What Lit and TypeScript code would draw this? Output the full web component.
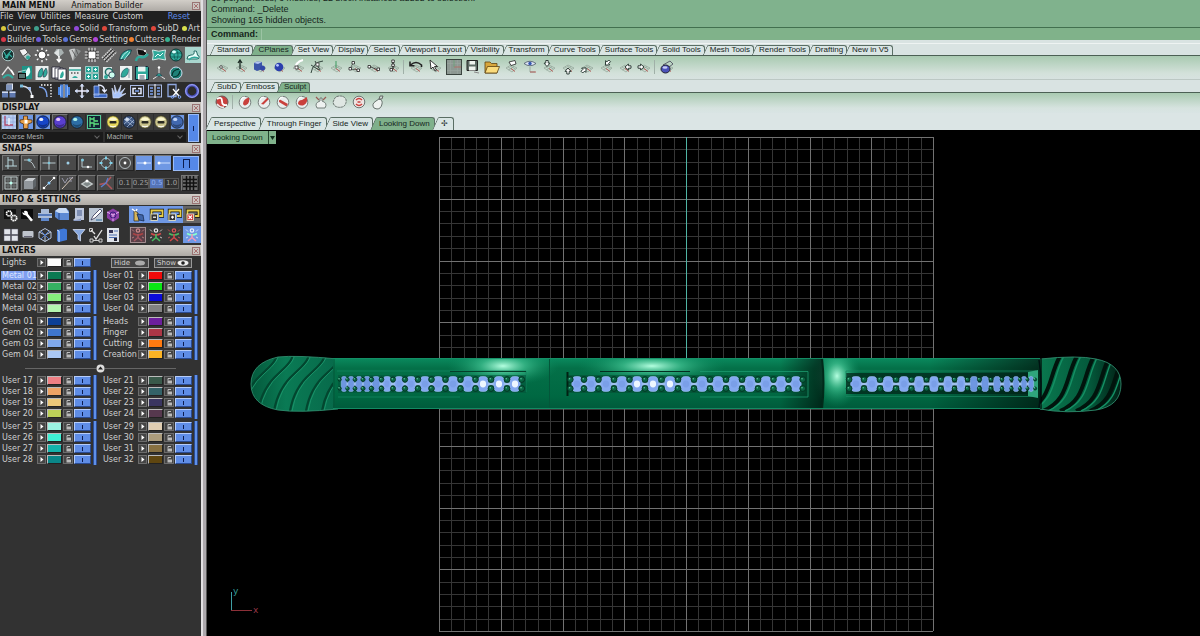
import { LitElement, html, css, svg, nothing } from "lit";
import { customElement, property } from "lit/decorators.js";
import { classMap } from "lit/directives/class-map.js";
import { styleMap } from "lit/directives/style-map.js";

const T = "#2fa99b";
const sphere = (c: string, hi = "#fff") => svg`
  <circle cx="8" cy="8" r="6.2" fill=${c} stroke="#12151c" stroke-width=".8"/>
  <path d="M3.4 9.5a4.8 4.8 0 0 0 9.3-.2 8 8 0 0 1-9.3.2z" fill="#000" opacity=".3"/>
  <ellipse cx="6.2" cy="5.4" rx="2.1" ry="1.7" fill=${hi} opacity=".9"/>`;
const bulb = (on: boolean) => svg`
  <circle cx="8" cy="8" r="6.3" fill=${on ? "#e6d75a" : "#c9c28a"} stroke="#3a3928"/>
  <path d="M3.5 5.5Q8 1 12.5 5.5 8 8 3.5 5.5z" fill="#fbf7cf"/>
  <rect x="4.5" y="7" width="7" height="2.4" rx="1" fill="#2a2a22"/>
  <path d="M5 12q3 1.6 6 0" stroke="#fff" fill="none"/>`;
const ring = (k: string) => svg`
  <ellipse cx="8" cy="8.4" rx="5.8" ry="6" fill="#e9eeee" stroke="#6c7472" stroke-width=".9"/>
  <path d=${k} fill="#c9403c"/><path d="M4 6q1-3 4-3" stroke="#fff" fill="none" stroke-width="1.2"/>`;
const plane = svg`
  <path d="M3 9l5-3 6 3-5 4zM5 8l6 3.5M7 7l5.500 3M5.500 11L11 7.500" fill="none" stroke="#8fa295" stroke-width=".7"/>
  <path d="M8 9.500l4 3" stroke="#b4615d" stroke-width="1"/>`;
const arrowAt = (x: number, y: number, a: number) => svg`
  <path transform=${`translate(${x} ${y}) rotate(${a})`} d="M-1.200 -3h2.400v2.600h1.800L0 3 -3 -.4h1.800z" fill="#fff" stroke="#20302a" stroke-width=".9"/>`;
const figure = (a: string, b: string, c: string) => svg`
  <circle cx="8" cy="3.500" r="1.700" fill="none" stroke=${a} stroke-width="1.200"/>
  <path d="M3 6.500q5 3 10 0" fill="none" stroke=${b} stroke-width="1.500"/>
  <path d="M8 7v3.500L4 14M8 10.500L12 14" fill="none" stroke=${c} stroke-width="1.600"/>
  <path d="M2 2.500l2 2M14 2.500l-2 2M2 11l2-1M14 11l-2-1" stroke=${a} stroke-width=".8"/>`;
const frame = (c: string, k: string) => svg`
  <path d="M3.500 13V3.500h11V9H11" fill="none" stroke="#111" stroke-width="3.400"/>
  <path d="M3.500 13V3.500h11V9H11" fill="none" stroke="#e5cc4b" stroke-width="1.800"/>
  <rect x="3" y="7" width="6.500" height="6.500" fill=${c} stroke="#f4efd0" stroke-width=".8"/>
  <path d=${k} stroke="#fff" stroke-width="1.200"/>`;

const ICONS: Record<string, unknown> = {
  orb: svg`<circle cx="8" cy="8" r="5.800" fill="#16302f" stroke="#a9c3c3"/><path d="M4 5l3 6 2-4 3 3M5 11l6-7" stroke=${T} fill="none" stroke-width="1.300"/>`,
  spot: svg`<path d="M2 3l6-1.500 3 4-5 4z" fill="#f2f2f2" stroke="#333" stroke-width=".7"/><path d="M6 9.500l5-4 3.500 3.500-4 5z" fill="#b9c4c4" stroke="#333" stroke-width=".7"/><circle cx="11" cy="10.500" r="2" fill=${T}/>`,
  sun: svg`<circle cx="8" cy="8" r="4" fill="#fff" stroke="#222" stroke-width=".8"/><path d="M8 .8v2.200M8 13v2.200M.8 8H3M13 8h2.200M2.900 2.900l1.500 1.500M11.600 11.600l1.500 1.500M2.900 13.100l1.500-1.500M11.600 4.400l1.500-1.500" stroke="#fff" stroke-width="1.300"/>`,
  gemlight: svg`<path d="M3 6l2.500-4h5L13 6l-5 4z" fill="#a8b1b1"/><path d="M3 6l5 4V2z" fill="#e0e4e4"/><path d="M8 9v5M5.800 12L8 14.800 10.200 12" stroke="#fff" stroke-width="1.500" fill="none"/>`,
  cone: svg`<path d="M2 3q6-3 12 1L6 14z" fill="#8b8f8f"/><path d="M2 3q3-1.500 6-1.200L6 14z" fill="#c9cccc"/><path d="M5 3l4 7M9 2.500l2 5" stroke="#444" stroke-width=".7"/>`,
  chip: svg`<rect x="4" y="4" width="8" height="8" fill="#fff" stroke="#111"/><path d="M5 .8v3M8 .8v3M11 .8v3M5 12v3M8 12v3M11 12v3M.8 5h3M.8 8h3M.8 11h3M12 5h3M12 8h3M12 11h3" stroke="#e8e8e8" stroke-width="1.100"/>`,
  hatch: svg`<path d="M1 11L11 1M3 13L13 3M5.500 15L15.500 5" stroke="#d8d8d8" stroke-width="1.400" stroke-dasharray="1.600 .7"/><path d="M2 12L12 2M4 14L14 4" stroke="#222" stroke-width=".7"/>`,
  fish: svg`<path d="M1.500 13q1-7 6-9 3-2 6-1-1 5-4 7-3 3-8 3z" fill=${T} stroke="#123" stroke-width=".7"/><path d="M3 12q2-5 7-8M6 13q3-4 6-8" stroke="#dff" fill="none" stroke-width=".8"/>`,
  snake: svg`<path d="M3 2l6 1 4 3-3 3-6-1z" fill="#111" stroke="#ddd" stroke-width=".6"/><path d="M2 14q1-5 5-4 4 1 7-3" fill="none" stroke=${T} stroke-width="2.400"/><circle cx="11" cy="4" r="1" fill="#fff"/>`,
  cloth: svg`<path d="M1.500 3q6 2.500 13 0-1.500 5 0 10-7-2.500-13 0 1.500-5 0-10z" fill=${T} stroke="#cfe9e6"/><path d="M4 10l3-3 2 2 3-3" stroke="#e9fffc" fill="none"/>`,
  globe: svg`<circle cx="8" cy="8" r="6" fill=${T} stroke="#103532"/><path d="M2.500 6h11M2.500 10h11M8 2q-4 6 0 12M8 2q4 6 0 12" stroke="#0e5a54" fill="none" stroke-width=".8"/><ellipse cx="6" cy="5" rx="2" ry="1.400" fill="#dff"/>`,
  twist: svg`<rect width="16" height="16" fill="#a9d6ce"/><path d="M2 12q0-4 4-4t3-4q3-1 3 2t2 3q1 3-2 3z" fill="#e9fffb" stroke="#256b64"/><path d="M4 13q3-4 9-2" stroke=${T} stroke-width="1.500" fill="none"/>`,
  arcs: svg`<path d="M2 10L8 2l5 6" fill="none" stroke="#e4e4e4" stroke-width="1.300"/><path d="M3 13q5-6 10 0" fill="none" stroke=${T} stroke-width="2"/><path d="M11 5l3 5" stroke="#fff" stroke-width="1.500"/>`,
  clapper: svg`<rect x="5" y="1" width="10" height="13" fill="#1f9387"/><path d="M8 12q0-7 4-10 3 5-1 9z" fill="#eafffc"/><rect x="1" y="8" width="8" height="6" fill="#111"/><path d="M1 7l8-2M2 10h6M2 12h6" stroke="#9fd8d2"/>`,
  page1: svg`<rect x="1.500" y="1" width="13" height="14" fill="#e9eeee"/><path d="M4 12q0-7 4-9 3 5-1 9zM9 12q0-6 3-9 3 5-1 9z" fill=${T} stroke="#234" stroke-width=".6"/>`,
  page2: svg`<path d="M1 2h8v11H1zM4 3h8v11H4z" fill="#fff" stroke="#223" stroke-width=".8"/><path d="M7 4h8v11H7z" fill="#fff" stroke="#223" stroke-width=".8"/><path d="M9 13q0-5 3-7 2 4-1 7z" fill=${T}/>`,
  calendar: svg`<rect x="2" y="2" width="12" height="13" fill="#e6ebeb"/><path d="M2 5h12" stroke=${T} stroke-width="1.500"/><path d="M4 8h1.500M7 8h1.500M10 8h1.500" stroke="#555" stroke-width="1.500"/><path d="M5 13q3-4 6 0z" fill=${T}/>`,
  quad: svg`<path d="M1.500 1.500h6v6h-6zM8.500 1.500h6v6h-6zM1.500 8.500h6v6h-6zM8.500 8.500h6v6h-6z" fill="#1f9f92" stroke="#bfe9e4" stroke-width=".7"/><path d="M3 4.500h3M10 4.500h3M3 11.500h3M10 11.500h3M4.500 3v3M11.500 3v3M4.500 10v3M11.500 10v3" stroke="#e9fffc"/>`,
  rings: svg`<rect x="2" y="2" width="9" height="12" fill="#dfe7e7"/><circle cx="8" cy="7" r="3.600" fill="none" stroke="#1d6f67" stroke-width="1.500"/><circle cx="11" cy="10" r="3.200" fill="#cfe" stroke="#345"/><circle cx="5" cy="12" r="2" fill=${T}/>`,
  page3: svg`<rect x="2" y="1" width="12" height="14" fill="#eef2f2"/><path d="M3 12Q3 5 9 3q3 1 1 5-2 5-7 4z" fill=${T} stroke="#245" stroke-width=".6"/><path d="M11 4v9" stroke="#89a"/>`,
  floppy: svg`<path d="M1.500 1.500h12l1 1v12h-13z" fill=${T} stroke="#123"/><rect x="4" y="1.500" width="7.500" height="5" fill="#e9f3f2"/><rect x="4" y="9" width="8" height="5.500" fill="#fff"/><path d="M5.500 11h5M5.500 13h5" stroke="#456"/>`,
  axes: svg`<path d="M8 2v8L2 14M8 10l6 4" stroke="#e8e8e8" fill="none"/><circle cx="8" cy="2.500" r="1.200" fill="#fff"/><path d="M5 11q3-5 6 0z" fill=${T} stroke="#134" stroke-width=".6"/>`,
  orb2: svg`<circle cx="8" cy="8" r="6" fill="#1e8178" stroke="#cde"/><path d="M4 11q0-6 7-7M5 12q6 0 7-6" stroke="#062e2a" fill="none" stroke-width="1.200"/>`,
  cubes: svg`<path d="M5 1.500h6v6H5z" fill="#7f94bc"/><path d="M5 1.500l1.500-1H12l-1 1zM11 1.500l1-1v5.500l-1 1.500z" fill="#dfe6f5"/><path d="M1 8.500h6v6H1zM8.500 8.500h6v6h-6z" fill="#5f78ae"/><path d="M1 8.500h6v1.500H1zM8.500 8.500h6v1.500h-6z" fill="#d3dcf0"/>`,
  curve: svg`<path d="M2 3q10 0 11 11" fill="none" stroke="#d3d9e4" stroke-width="1.300"/><rect x="1" y="1.500" width="3" height="3" fill="#7bd"/><rect x="9" y="4" width="3" height="3" fill="#9ab6ea"/><rect x="11.500" y="12" width="3" height="3" fill="#fff"/>`,
  offset: svg`<path d="M1 4q8 0 8 10" fill="none" stroke="#7aa0e8" stroke-width="1.500"/><path d="M3 2h10v12" fill="none" stroke="#fff" stroke-width="1.300" stroke-dasharray="1.500 1.500"/>`,
  mirror: svg`<path d="M7 1.500v13H4V12H2V4h2V1.500zM9 1.500v13h3V12h2V4h-2V1.500z" fill="#4b84dc"/><path d="M8 1v14" stroke="#dfe9ff"/><path d="M4.500 3v10M11.500 3v10" stroke="#9cc0ff" stroke-width=".8"/>`,
  move: svg`<path d="M8 1v14M1 8h14" stroke="#eef" stroke-width="1.500"/><path d="M5.500 3.500L8 .8l2.500 2.700zM5.500 12.500L8 15.200l2.500-2.700zM3.500 5.500L.8 8l2.700 2.500zM12.500 5.500L15.200 8l-2.700 2.500z" fill="#cdd9f5"/>`,
  rotate: svg`<path d="M2 3h5v9H2zM2 11h13v3.500H2z" fill="#3a66c4" stroke="#a9c0f4" stroke-width=".8"/><path d="M6 2q6.500 0 6.500 6M10.300 6.500l2.200 2.500 2.200-2.500" fill="none" stroke="#e8edff" stroke-width="1.300"/>`,
  burst: svg`<path d="M2 15L1 5l3 6-.5-9L6 10l4-8-1.500 8L14 5l-4 6.500 5-1L8 15z" fill="#a9c4fa" stroke="#dfe8ff" stroke-width=".6"/>`,
  link: svg`<rect x="1.500" y="2.500" width="13" height="11" fill="none" stroke="#aabbe6"/><path d="M7 5.500H4v5h3M9 5.500h3v5H9" fill="none" stroke="#e6ecff" stroke-width="1.500"/><path d="M6 8h4" stroke="#7ea4f4" stroke-width="1.500"/>`,
  split: svg`<rect x="1.500" y="2" width="13" height="12" fill="none" stroke="#aabbe6"/><path d="M8 1v14" stroke="#fff"/><path d="M3 5h3M3 8h3M3 11h3M10 5h3M10 8h3M10 11h3" stroke="#7ea4f4" stroke-width="1.300"/>`,
  cut: svg`<path d="M2 1.500h8v12H2z" fill="none" stroke="#8fa8e0" stroke-width="1.300"/><path d="M7 6l6 7M13 6l-6 7" stroke="#fff" stroke-width="1.300"/><circle cx="13.500" cy="14" r="1.300" fill="none" stroke="#7ea4f4"/><circle cx="6.500" cy="14" r="1.300" fill="none" stroke="#7ea4f4"/>`,
  donut: svg`<circle cx="8" cy="8" r="5.800" fill="none" stroke="#4b52c0" stroke-width="2.800"/><circle cx="8" cy="8" r="6.300" fill="none" stroke="#b4bcff" stroke-width=".9"/>`,
  cplane: svg`<rect x="1" y="1" width="14" height="14" fill="#b8cdf0"/><path d="M4 1v14M8 1v14M12 1v14M1 4h14M1 8h14M1 12h14" stroke="#8fa8d8" stroke-width=".7"/><path d="M4 2v9h8" fill="none" stroke="#b04a6a" stroke-width="1.300"/><path d="M8 4v7" stroke="#fff" stroke-width="1.300"/>`,
  hand: svg`<path d="M5.500 14.500V10L2 8.500V6l3.500-.5V2h4v3.500L14 6v2.500L10 10v4.500z" fill="#e8a14b" stroke="#4e2f10" stroke-width=".8"/><path d="M6.500 6h3v3.500h-3z" fill="#fff"/>`,
  sBlue: sphere("#1746c8"), sViolet: sphere("#5a3fd0", "#f6d6ff"), sSky: sphere("#2d6ea6", "#bfe"), sBig: sphere("#4168b0", "#cfe0ff"),
  sWire: svg`${sphere("#3f5a86", "#e6eefc")}<path d="M3 5l9 7M5 3l8 6M3 10l8-7M6 13l7-7" stroke="#b4c4de" stroke-width=".7"/>`,
  tree: svg`<rect x="1.500" y="1.500" width="13" height="13" fill="#123" stroke="#5c9"/><path d="M4 3v10M4 5h4M8 3v4h4M4 9h4v4M8 10h5" stroke="#5be07e" fill="none" stroke-width="1.300"/>`,
  bulb1: bulb(true), bulb2: bulb(false),
  sn1: svg`<path d="M5 2v12M2 11h12M5 5h5v6" fill="none" stroke="#b8d6dc"/>`,
  sn2: svg`<path d="M2 5h8M6 5q5 2 7 8" fill="none" stroke="#b5c0c4"/><circle cx="7" cy="5" r="1.500" fill="#7fc8dc"/>`,
  sn3: svg`<path d="M8 1.500v13M1.500 8h13" stroke="#b8c8cc"/><circle cx="8" cy="8" r="1.300" fill="#7fc8dc"/>`,
  sn4: svg`<circle cx="8" cy="8" r="1.500" fill="#9fd0e8"/>`,
  sn5: svg`<path d="M3 12h10M3 4v8" stroke="#b8c8cc"/><circle cx="3.500" cy="5" r="1.500" fill="#7fc8dc"/><circle cx="9" cy="12" r="1.300" fill="#fff"/>`,
  sn6: svg`<circle cx="8" cy="8" r="4.800" fill="none" stroke="#a8bcc4"/><path d="M8 1.500v3M8 11.500v3M1.500 8h3M11.500 8h3" stroke="#7fd0e8" stroke-width="2"/>`,
  sn7: svg`<circle cx="8" cy="8" r="5.500" fill="none" stroke="#b4bcc0"/><circle cx="8" cy="8" r="1.400" fill="#fff"/>`,
  sn8: svg`<path d="M1 8h14" stroke="#cfe0ff"/><circle cx="9" cy="8" r="1.500" fill="#fff"/>`,
  sn9: svg`<path d="M4 8h11" stroke="#cfe0ff"/><circle cx="4" cy="8" r="1.500" fill="#fff"/>`,
  grid: svg`<path d="M2 2h12v12H2zM8 2v12M2 8h12" fill="none" stroke="#b7c3c3"/><path d="M5 2v12M11 2v12M2 5h12M2 11h12" stroke="#7d8888" stroke-width=".6"/><circle cx="8" cy="8" r="1.500" fill="#bfe"/>`,
  cube: svg`<path d="M2 6l4-3h8l-3 3z" fill="#c8ccd0"/><path d="M2 6h9v8H2z" fill="#92979c"/><path d="M11 6l3-3v8l-3 3z" fill="#5f6468"/>`,
  line: svg`<path d="M3 13L13 3" stroke="#c2c8cc"/><circle cx="3" cy="13" r="1.300" fill="#fff"/><circle cx="8" cy="8" r="1.500" fill="#8cf"/><circle cx="13" cy="3" r="1.300" fill="#fff"/>`,
  vp: svg`<path d="M2 14L13 2" stroke="#d5c5b5"/><path d="M2 3l3 5 3-5M9 3h4M9 6h3" stroke="#99a" fill="none"/>`,
  tile: svg`<path d="M1.500 9L8 5l6.500 4L8 13z" fill="#c3c9c9"/><path d="M4 9l4-2.500L12 9l-4 2.500z" fill="#808888"/><circle cx="8" cy="6" r="1.500" fill="#fff"/>`,
  kite: svg`<path d="M1.500 9.500L8 8l5-6M8 8l6 6" fill="none" stroke="#b0555a" stroke-width="1.500"/><path d="M3 12l5-4 2-5" stroke="#5b7fd0" stroke-width="1.300" fill="none"/>`,
  lattice: svg`<rect x="1" y="1" width="14" height="14" fill="#6c6c6c"/><path d="M4.500 1v14M8 1v14M11.500 1v14M1 4.500h14M1 8h14M1 11.500h14" stroke="#111" stroke-width="1.500"/>`,
  gears: svg`<rect x="1" y="2" width="12" height="10" fill="#111"/><circle cx="6" cy="6.500" r="2.500" fill="none" stroke="#fff" stroke-width="1.700" stroke-dasharray="1.500 .5"/><circle cx="11" cy="11" r="2.700" fill="#333" stroke="#fff" stroke-width="1.800" stroke-dasharray="1.500 .6"/>`,
  wrench: svg`<rect x="1" y="2" width="12" height="10" fill="#0a0a0a"/><path d="M4 4q4-1 4 3l5 6-2 1.500-5-6Q2 8 2.500 5l2 1.500z" fill="#fff"/>`,
  printer: svg`<path d="M4 2h8v4H4zM1 6h14v5H1z" fill="#a9bcd8"/><path d="M1 8h14" stroke="#3c66b0" stroke-width="1.500"/><path d="M4 11h8v3H4z" fill="#5f88cc"/>`,
  boxes: svg`<path d="M1 4l4-3h7l3 3v9H5l-4-3z" fill="#5d8ad4"/><path d="M1 4l4 2h10l-3-5H5z" fill="#c9dbf5"/><path d="M5 6v7" stroke="#1f3f80"/>`,
  sheet: svg`<path d="M4 1h9v12H2l2-2z" fill="#bcc6dc"/><path d="M6 4h5M6 6h5M6 8h5" stroke="#445b8c"/><path d="M2 13q6 0 8-2v3H3z" fill="#8c9cc4"/>`,
  pen: svg`<rect x="1" y="1" width="14" height="14" fill="#b9c4d2"/><path d="M3 13l2-4 7-7 2 2-7 7z" fill="#fff" stroke="#335" stroke-width=".8"/><path d="M8 13h6" stroke="#2c6c9c"/>`,
  magcube: svg`<path d="M2 5l6-3.500L14 5v6l-6 4-6-4z" fill="#8d3fa8"/><path d="M2 5l6 3 6-3M8 8v6" stroke="#e4b4f4" fill="none"/><circle cx="8" cy="8" r="3" fill="none" stroke="#3b1c80"/>`,
  spray: svg`<path d="M4 3l4 3 1 8H4z" fill="#d8b65a" stroke="#222" stroke-width=".7"/><path d="M7 7l6 1 1 6-5-1z" fill="#3f64a8" stroke="#124" stroke-width=".7"/><path d="M2 2l3 2M7 2L6 4" stroke="#fff" stroke-width="1.500"/>`,
  fr1: frame("#333", "M5 10.200h3"), fr2: frame("#333", "M5 10.200h3M6.500 8.700v3"), fr3: frame("#c33", "M4.500 8.500l3.500 3.500M8 8.500L4.500 12"),
  win: svg`<path d="M1 2h6.500v5.500H1zM8.500 2H15v5.500H8.500zM1 8.500h6.500V14H1zM8.500 8.500H15V14H8.500z" fill="#e2e5ea" stroke="#556" stroke-width=".5"/>`,
  label: svg`<rect x="2.500" y="4" width="11" height="6.500" rx="1" fill="#bfc4cc"/><path d="M4 9.500h8" stroke="#667"/>`,
  wirebox: svg`<path d="M2 5l6-3.500L14 5v6l-6 3.500L2 11zM2 5l6 3 6-3M8 8v6.500" fill="none" stroke="#b9c6dc"/><path d="M4 4l8 8M12 4l-8 8" stroke="#4d78c8"/>`,
  book: svg`<path d="M3 3l7-1.500 3 1V13l-8 2-2-1z" fill="#3f78d8"/><path d="M3 3l2 1v11" stroke="#cfe0ff" fill="none"/>`,
  funnel: svg`<path d="M2 2.500h12L9.500 8v6L7 12V8z" fill="#86a6dc" stroke="#e4ecff" stroke-width=".7"/>`,
  nodes: svg`<path d="M3 3l4 4M6 9l2 3 6-9" fill="none" stroke="#e4e4e4" stroke-width="1.300"/><path d="M1.500 1.500h3v3h-3zM2 12h3v3H2zM11 12h3v3h-3z" fill="none" stroke="#ccc"/><path d="M5 13.500h6" stroke="#ccc"/>`,
  card: svg`<rect x="2" y="1" width="12" height="14" fill="#dfe3ea"/><rect x="4" y="3" width="4" height="3" fill="#335"/><path d="M9 4h4M4 8h8M4 10.500h8" stroke="#4a6cb0"/><rect x="9" y="11" width="3" height="3" fill="#223"/>`,
  f1: svg`<rect x=".5" y=".5" width="15" height="15" fill="#5a4048" stroke="#b9a0a4" stroke-width=".8"/>${figure("#c88", "#a44", "#a35560")}`,
  f2: figure("#e7e7e7", "#d04a4a", "#49b862"), f3: figure("#d55", "#49b862", "#d04a4a"), f4: figure("#e4f0ff", "#8fc", "#e9b"),
  p1: svg`${plane}<circle cx="7" cy="8" r="1.300" fill="#fff" stroke="#222" stroke-width=".7"/>`,
  p2: svg`${plane}<path d="M7 10V1.500M5 4l2-3 2 3" stroke="#1c2a24" stroke-width="1.300" fill="none"/>`,
  p3: svg`${plane}<path d="M2 4l3-1.500 5 .5v7l-5 2-3-1.500z" fill="#3b55a8"/><path d="M2 4l3-1.500 5 .5-4 2z" fill="#b3c4f0"/><circle cx="10.500" cy="9" r="2.600" fill="#3348a8"/>`,
  p4: svg`${plane}<circle cx="8" cy="8" r="4.300" fill="#2b3fae"/><circle cx="6.500" cy="6.300" r="1.400" fill="#b6c6ff"/>`,
  p5: svg`${plane}<path d="M13 1Q5 3 5 11" stroke="#fff" stroke-width="2" fill="none"/><rect x="5" y="7" width="3" height="3" fill="#fff" stroke="#222" stroke-width=".8"/>`,
  p6: svg`${plane}<path d="M2 14q2-11 12-12M6 2l5 9M2 6l8 5" stroke="#33453d" fill="none" stroke-width="1"/><rect x="7" y="4" width="3" height="3" fill="#fff" stroke="#222" stroke-width=".7"/>`,
  p7: svg`${plane}<path d="M8 9V2" stroke="#4aa06a" stroke-width="1.100"/>`,
  p8: svg`${plane}<path d="M6 4l-3 6 8 1" stroke="#222" stroke-width=".6" fill="none"/><path d="M5 2.500h2.500V5H5zM2 8.500h2.500V11H2zM10 10h2.500v2.500H10z" fill="#fff" stroke="#222" stroke-width=".8"/>`,
  p9: svg`${plane}<path d="M2 6.500h2.500V9H2zM11 9h2.500v2.500H11z" fill="#fff" stroke="#222" stroke-width=".8"/><path d="M5 8l6 2.500" stroke="#222" stroke-width=".7"/>`,
  p10: svg`${plane}<path d="M8 10V3" stroke="#222" stroke-width="1.200"/><path d="M6.800 1h2.500v2.500H6.800zM6.800 5h2.500v2.500H6.800zM5 9.500h2.500V12H5z" fill="#fff" stroke="#222" stroke-width=".8"/>`,
  undo: svg`${plane}<path d="M2.500 6Q8 1 13.500 6v2M2 2.500v4.200h4.500" stroke="#222" stroke-width="1.600" fill="none"/>`,
  pick: svg`${plane}<path d="M3 1l1 9 2-2 2 4 1.500-.8-2-3.700h3z" fill="#fff" stroke="#222" stroke-width=".9"/>`,
  cgrid: svg`<rect x=".5" y=".5" width="15" height="15" fill="#8d9892" stroke="#3a443f"/><path d="M1 4.500h14M1 11.500h14M4.500 1v14M11.500 1v14" stroke="#9aa59f" stroke-width=".7"/><path d="M8 8h7" stroke="#b07068"/><path d="M8 1v7" stroke="#70a07c"/>`,
  save: svg`<path d="M2 1.500h10.500v10H2z" fill="#5c6a64" stroke="#222"/><path d="M4.500 2h5.500v3.500H4.500zM4 7.500h6.500v4H4z" fill="#eef2ee"/><path d="M9 13l5 1" stroke="#888"/>`,
  folder: svg`<path d="M1 3h5l1.500 1.500H13V14H1z" fill="#d8a63c" stroke="#5e4310" stroke-width=".8"/><path d="M3.500 7.500H15.500L13 14H1z" fill="#fbdc7c" stroke="#5e4310" stroke-width=".8"/>`,
  q1: svg`${plane}<path d="M6 3l6-1.500 1 3.500-5 1.500z" fill="#fff" stroke="#222" stroke-width=".8"/>`,
  q2: svg`<path d="M2 4.500q6-4.500 12 0-6 4.500-12 0z" fill="#dfe6f5" stroke="#4a5568" stroke-width=".8"/><circle cx="8" cy="4.500" r="1.700" fill="#3658b0"/><path d="M8 8v5h5" stroke="#99a8a0" fill="none"/><path d="M8 13h6" stroke="#b4615d"/>`,
  a1: svg`${plane}${arrowAt(6, 4.5, 0)}`, a2: svg`${plane}${arrowAt(8, 12, 180)}`, a3: svg`${plane}${arrowAt(5, 11, 225)}`, a4: svg`${plane}${arrowAt(9.5, 4, 45)}`,
  a5: svg`${plane}${arrowAt(11, 8, 90)}`, a6: svg`${plane}${arrowAt(5, 8, 270)}`,
  q3: svg`${plane}<path d="M4 6L11 2l3 3-4 3z" fill="none" stroke="#445" stroke-width=".8"/><ellipse cx="6.500" cy="10" rx="4.500" ry="4" fill="#4a52b8" stroke="#223"/><ellipse cx="6" cy="8.500" rx="2.500" ry="1.300" fill="#c6ccf6"/>`,
  r0: svg`<circle cx="8" cy="8" r="6" fill="#c9413e" stroke="#6a5a58"/><path d="M3 5q5-3 5 2t5 4" stroke="#fff" stroke-width="1.800" fill="none"/><path d="M3 10q3 4 7 3" stroke="#e9eeee" stroke-width="1.400" fill="none"/>`,
  r1: ring("M6 10q0-5 6-6.500 1 5-2 7-3 2-4-.5z"), r2: ring("M5 10l6.500-6.500 1 2-5 5z"), r3: ring("M4 5l9 5-1.500 2.500L4 8z"), r4: ring("M4 10q0-4 4-4l5-3q1 6-3 8-3 1.500-6-1z"),
  r5: svg`<path d="M4 14q-3-5 3-7V4h2v3q6 2 3 7z" fill="#eef2f0" stroke="#68736e" stroke-width=".9"/><path d="M3 3l3 3M13 3l-3 3" stroke="#9a5a54" stroke-width="1.200"/>`,
  r6: svg`<path d="M5 2.500q3-1 6 0 4 2 3 6-1 4-4 4.500-4 1-7-1-3-3-1-6 1-3 3-3.500z" fill="#dfe7e3" stroke="#68736e" stroke-width="1" stroke-dasharray="2.500 .6"/>`,
  r7: svg`<circle cx="8" cy="8" r="5.800" fill="#eee3e1" stroke="#6c7472"/><path d="M5 6q3-3 6 0M5 10q3 3 6 0M6.500 8h3" stroke="#c9403c" stroke-width="1.500" fill="none"/>`,
  r8: svg`<path d="M4 14q-3-4 2-7l3-2q4 1 3 5-1 5-5 5z" fill="#eef2f0" stroke="#68736e"/><path d="M9 5l1-3h3l-1 3z" fill="#cdd5d1" stroke="#444" stroke-width=".7"/>`,
};

@customElement("tool-icon")
class ToolIcon extends LitElement {
  static styles = css`
    :host { display: inline-flex; }
    .b { all: unset; display: flex; align-items: center; justify-content: center; flex: 1; cursor: pointer; overflow: hidden; }
    .b:focus-visible { outline: 1px solid #9cf; }
    .g { width: 16px; height: 16px; display: block; flex: none; }
  `;
  @property() name = "";
  @property() tip = "";
  render() {
    return html`<button class="b" type="button" aria-label=${this.tip || this.name}>
      <svg class="g" viewBox="0 0 16 16" aria-hidden="true">${ICONS[this.name]}</svg></button>`;
  }
}

type Layer = [string, string];
const GROUPS: { rows: Layer[] }[][] = [
  [
    { rows: [["Metal 01", "#0c7a52"], ["Metal 02", "#35b062"], ["Metal 03", "#86ef7c"], ["Metal 04", "#b4f5b0"]] },
    { rows: [["User 01", "#f00a0a"], ["User 02", "#08e814"], ["User 03", "#0a0ad8"], ["User 04", "#828282"]] },
  ],
  [
    { rows: [["Gem 01", "#0c3f96"], ["Gem 02", "#3f76cc"], ["Gem 03", "#7fa8ec"], ["Gem 04", "#abc8f4"]] },
    { rows: [["Heads", "#6c1f9c"], ["Finger", "#ab3646"], ["Cutting", "#ff7a10"], ["Creation", "#fbb324"]] },
  ],
  [
    { rows: [["User 17", "#ee7f84"], ["User 18", "#eda365"], ["User 19", "#ecc879"], ["User 20", "#bcd058"]] },
    { rows: [["User 21", "#39594a"], ["User 22", "#336268"], ["User 23", "#3a3560"], ["User 24", "#56384e"]] },
  ],
  [
    { rows: [["User 25", "#9bf2e2"], ["User 26", "#3ff0d4"], ["User 27", "#14b3ab"], ["User 28", "#0a8688"]] },
    { rows: [["User 29", "#dfcdb2"], ["User 30", "#ab9c7c"], ["User 31", "#877041"], ["User 32", "#5f4610"]] },
  ],
];

@customElement("tool-panel")
class ToolPanel extends LitElement {
  static styles = css`
    :host { display: flex; flex-direction: column; background: #323232; color: #d0d0d0; font: 8px/11px "DejaVu Sans", Verdana, sans-serif; }
    button { font: inherit; color: inherit; }
    .head { display: flex; align-items: center; height: 11px; margin: 0; padding: 0 1px 0 2px; background: linear-gradient(#d2cec8, #aeaaa5); color: #111; white-space: nowrap; }
    .head h2 { font: inherit; font-weight: bold; margin: 0; }
    .head .sub { margin-left: 16px; }
    .x { margin-left: auto; width: 8px; height: 8px; padding: 0; border: 1px solid #9a7474; background: #c9c4c0; display: block; }
    .x svg { display: block; width: 6px; height: 6px; }
    .menu { display: flex; height: 11px; background: #202020; }
    .menu button, .tags button { all: unset; cursor: pointer; white-space: nowrap; }
    .menu button { margin-right: 4px; }
    .menu .reset { margin: 0 11px 0 auto; color: #5f8be8; }
    .tags { display: flex; justify-content: space-between; height: 12px; align-items: center; padding: 0 1px; background: #242424; overflow: hidden; }
    .tags.last { padding-bottom: 1px; height: 11px; }
    .tags button { display: flex; align-items: center; }
    .dot { width: 5px; height: 5px; border-radius: 50%; margin-right: 1px; }
    .icons { display: grid; grid-auto-rows: 18px; }
    .twelve { grid-template-columns: repeat(12, minmax(0, 1fr)); background: #646464; }
    .eleven { grid-template-columns: repeat(11, minmax(0, 1fr)); background: #2c2c2c; margin-bottom: 2px; }
    .display { display: grid; grid-template-columns: minmax(0, 102fr) minmax(0, 81fr) 11px; gap: 0 2px; padding: 1px 2px 1px 0; height: 30px; box-sizing: border-box; background: #2e2e2e; }
    .row { display: flex; gap: 1px; padding: 0 1px; }
    .row tool-icon, .snap tool-icon { height: 16px; background: #4a4a4a; border: 1px solid #777; border-color: #777 #222 #222 #777; box-sizing: border-box; }
    .row tool-icon { flex: 1 1 0; min-width: 0; }
    .row tool-icon.plain { background: #3a3a3a; border-color: #3a3a3a; }
    tool-icon.on { background: #6f98e4 !important; }
    .sel { display: flex; position: relative; margin-top: 2px; }
    .sel select { appearance: none; width: 100%; height: 10px; padding: 0 2px; border: 0; background: #1a1a1a; color: #b0b0b0; font: 7px/10px "Liberation Sans", Arial, sans-serif; }
    .sel::after { content: ""; position: absolute; right: 4px; top: 2px; width: 3px; height: 3px; border: solid #666; border-width: 0 1px 1px 0; transform: rotate(45deg); pointer-events: none; }
    .tall { border: 1px solid #9bbcf8; background: #5588e8; padding: 0; display: flex; align-items: center; justify-content: center; }
    .bar { width: 1px; height: 5px; background: #0c1c50; }
    .snap { display: flex; height: 18px; align-items: center; gap: 1px; padding: 0 2px; }
    .snap tool-icon { flex: 0 0 16px; }
    .snap + .snap { margin: 2px 0; }
    .big { margin-left: auto; width: 34px; height: 15px; }
    .big .bar { width: 5px; height: 8px; border: solid #0c1c50; border-width: 1px 1px 0 1px; background: none; }
    .steps { display: flex; flex: 1; margin: 0 1px; }
    .steps button { flex: 1; height: 11px; padding: 0; border: 1px solid #555; background: #303030; color: #a0a0a0; line-height: 9px; font-size: 7px; }
    .steps .hot { background: #5574b8; color: #8fb0f4; }
    .info { display: flex; height: 19px; justify-content: space-between; align-items: center; padding: 0 0 0 2px; }
    .info.second { margin: 1px 0; }
    .info div { display: grid; grid-auto-flow: column; grid-auto-columns: 17px; height: 17px; }
    .info .g2 { grid-auto-columns: 18px; background: #666; }
    .info .g2.dark { background: #3a3a3a; }
    .lights { display: flex; justify-content: space-between; padding: 1px 9px 0 1px; height: 13px; box-sizing: border-box; margin-bottom: 1px; }
    .hs { display: flex; gap: 5px; padding-top: 1px; }
    .hs button { display: flex; align-items: center; justify-content: space-between; width: 38px; height: 10px; border: 1px solid #999; background: #444; padding: 0 2px; font-size: 7px; line-height: 8px; color: #d0d0d0; }
    .hs svg { width: 13px; height: 6px; }
    .pair { display: grid; grid-template-columns: 1fr 1fr; gap: 5px; padding: 0 4px 0 1px; margin-bottom: 2px; }
    .grp { display: grid; grid-template-columns: 1fr 4px; gap: 2px; }
    .side { background: #5f90e8; border: solid #2b4c94; border-width: 0 1px; box-sizing: border-box; }
    .lay { display: grid; grid-template-columns: 35px 9px 15px 10px 17px; gap: 1px; height: 11px; align-items: center; box-sizing: border-box; }
    .lay .nm { all: unset; padding-left: 1px; white-space: nowrap; cursor: pointer; }
    .lay .nm.cur { background: #7f9ff0; color: #dbe5ff; height: 9px; line-height: 9px; }
    .lay .c { height: 9px; padding: 0; border: 1px solid #6c6c6c; box-sizing: border-box; background: #454545; display: flex; align-items: center; justify-content: center; }
    .lay .c svg { width: 7px; height: 7px; display: block; }
    .lay .sw { border-color: #bbb #222 #222 #bbb; }
    .lay .tg { background: #5f8de6; border-color: #b5ccfa #2b4c94 #2b4c94 #b5ccfa; }
    .lay .tg .bar { height: 4px; }
    .rule { display: flex; align-items: center; gap: 0; padding: 0 25px; height: 13px; }
    .rule i { flex: 1; height: 1px; background: #666; }
    .rule button { padding: 0; border: 0; background: none; display: flex; }
    .rule svg { width: 9px; height: 9px; }
  `;
  head(t: string, sub = "") {
    return html`<div class="head"><h2>${t}</h2>${sub ? html`<span class="sub">${sub}</span>` : nothing}
      <button class="x" aria-label="Close"><svg viewBox="0 0 6 6"><path d="M1 1l4 4M5 1L1 5" stroke="#a05a5a" stroke-width=".8"/></svg></button></div>`;
  }
  tags(items: string[][], last = false) {
    return html`<div class=${classMap({ tags: true, last })}>${items.map(([n, c]) => html`<button><span class="dot" style=${styleMap({ background: c })}></span>${n}</button>`)}</div>`;
  }
  list(names: string, cls = "", on = "") {
    return names.split(" ").map((n, i) => html`<tool-icon name=${n} class="${cls} ${on[i] === "1" ? "on" : ""}"></tool-icon>`);
  }
  layer(n: string, c: string) {
    return html`<div class="lay">
      <button class=${classMap({ nm: true, cur: n === "Metal 01" })}>${n}</button>
      <button class="c" aria-label="Expand ${n}"><svg viewBox="0 0 7 7"><path d="M2.500 1l3 2.500-3 2.500z" fill="#fff"/></svg></button>
      <button class="c sw" aria-label="Colour of ${n}" style=${styleMap({ background: c })}></button>
      <button class="c" aria-label="Lock ${n}"><svg viewBox="0 0 7 7"><path d="M2 3.500V1.500h3" fill="none" stroke="#ccc" stroke-width=".9"/><path d="M1.500 3.500h4.500v3H1.500z" fill="#bbb"/></svg></button>
      <button class="c tg" aria-label="Show ${n}"><span class="bar"></span></button>
    </div>`;
  }
  pair(g: { rows: Layer[] }[]) {
    return html`<div class="pair">${g.map((s) => html`<div class="grp"><div>${s.rows.map(([n, c]) => this.layer(n, c))}</div><span class="side"></span></div>`)}</div>`;
  }
  render() {
    return html`
      ${this.head("MAIN MENU", "Animation Builder")}
      <nav class="menu">${["File", "View", "Utilities", "Measure", "Custom"].map((m) => html`<button>${m}</button>`)}<button class="reset">Reset</button></nav>
      ${this.tags([["Curve", "#d8c83c"], ["Surface", "#3fa08c"], ["Solid", "#9048d8"], ["Transform", "#e0483c"], ["SubD", "#e0483c"], ["Art", "#d8e04c"]])}
      ${this.tags([["Builder", "#d83848"], ["Tools", "#6c5cd8"], ["Gems", "#5c74d8"], ["Setting", "#b048d8"], ["Cutters", "#f08030"], ["Render", "#38b090"]], true)}
      <div class="icons twelve">${this.list("orb spot sun gemlight cone chip hatch fish snake cloth globe twist arcs clapper page1 page2 calendar quad rings page3 floppy axes orb2")}</div>
      <div class="icons eleven">${this.list("cubes curve offset mirror move rotate burst link split cut donut")}</div>
      ${this.head("DISPLAY")}
      <div class="display">
        <div><div class="row">${this.list("cplane hand sBlue sViolet", "", "1110")}${this.list("sSky tree", "plain")}</div>
          <label class="sel"><select aria-label="Mesh quality"><option>Coarse Mesh</option></select></label></div>
        <div><div class="row">${this.list("bulb1 sWire bulb2 bulb2 sBig", "plain", "00001")}</div>
          <label class="sel"><select aria-label="Display mode"><option>Machine</option></select></label></div>
        <button class="tall" aria-label="Toggle display"><span class="bar"></span></button>
      </div>
      ${this.head("SNAPS")}
      <div class="snap">${this.list("sn1 sn2 sn3 sn4 sn5 sn6 sn7 sn8 sn9", "", "000000011")}<button class="tall big" aria-label="Toggle snaps"><span class="bar"></span></button></div>
      <div class="snap">${this.list("grid cube line vp tile kite")}
        <div class="steps"><button>0.1</button><button>0.25</button><button class="hot">0.5</button><button>1.0</button></div>${this.list("lattice")}</div>
      ${this.head("INFO & SETTINGS")}
      <div class="info"><div>${this.list("gears wrench printer boxes sheet pen magcube")}</div><div class="g2">${this.list("spray fr1 fr2 fr3", "", "1110")}</div></div>
      <div class="info second"><div>${this.list("win label wirebox book funnel nodes card")}</div><div class="g2 dark">${this.list("f1 f2 f3 f4", "", "0001")}</div></div>
      ${this.head("LAYERS")}
      <div class="lights"><div>${this.layer("Lights", "#fbfbfb")}</div>
        <div class="hs"><button>Hide<svg viewBox="0 0 13 6"><ellipse cx="7" cy="3" rx="5" ry="2.500" fill="#aaa"/></svg></button>
        <button>Show<svg viewBox="0 0 13 6"><ellipse cx="7" cy="3" rx="5.500" ry="2.700" fill="#eee"/><circle cx="7" cy="3" r="1.800" fill="#222"/></svg></button></div></div>
      ${this.pair(GROUPS[0])}${this.pair(GROUPS[1])}
      <div class="rule"><i></i><button aria-label="Collapse"><svg viewBox="0 0 9 9"><circle cx="4.500" cy="4.500" r="4" fill="#ddd"/><path d="M2 5.500l2.500-3 2.500 3z" fill="#222"/></svg></button><i></i></div>
      ${this.pair(GROUPS[2])}${this.pair(GROUPS[3])}
    `;
  }
}

@customElement("model-view")
class ModelView extends LitElement {
  static styles = css`
    :host { display: flex; flex: 1; min-height: 0; position: relative; background: #000; }
    .scene { width: 100%; height: 100%; display: block; }
    .title { position: absolute; left: 0; top: 1px; display: flex; height: 13px; background: #80b28b; border: 0; padding: 0; font: 8px/13px "Liberation Sans", Arial, sans-serif; color: #10301c; }
    .title span { padding: 0 5px; border-right: 1px solid #24442e; }
    .title svg { width: 7px; height: 13px; }
    .ax { font: 9px "Liberation Mono", monospace; }
  `;
  stones(xs: number[], bright: number[], wf: (i: number) => number) {
    const mids = xs.map((x, i) => (i ? (x + xs[i - 1]) / 2 : x - wf(0) - 1.5));
    mids.push(xs[xs.length - 1] + wf(xs.length - 1) + 1.5);
    return svg`
      <rect x=${xs[0]} y="382.500" width=${xs[xs.length - 1] - xs[0]} height="3" fill="#9fc0ef"/>
      ${xs.map((x, i) => {
        const w = wf(i);
        const hot = bright.includes(i);
        return svg`
          <rect x=${x - w} y="376.500" width=${w * 2} height="15" rx=${w * 0.75} ry="4.500" fill=${w < 4 ? "#6c97e0" : "#84a9f0"} stroke="#a4c2f6" stroke-width=".5"/>
          <ellipse cx=${x} cy="384" rx=${w * 0.6} ry="3.400" fill=${hot ? "#f2faff" : "#7298e2"} opacity=${hot ? 0.95 : 0.55}/>`;
      })}
      ${mids.map((m, i) => {
        const r = Math.min(2.9, wf(Math.min(i, xs.length - 1)) * 0.58);
        return [379.500, 388.500].map((y) => svg`<circle cx=${m} cy=${y} r=${r} fill="#0a6544" stroke="#022c1c" stroke-width=".8"/><circle cx=${m - 0.7} cy=${y - 0.7} r=".8" fill="#5cc49a"/>`);
      })}`;
  }
  render() {
    const lines = [];
    for (let i = 0; i <= 40; i++) {
      const p = i * 12.35, major = i % 5 === 0;
      const c = major ? "#727272" : "#363636";
      lines.push({ major, s: svg`<path d="M${Math.round(439 + p)}.500 137V631M439 ${Math.round(137 + p)}.500H933" stroke=${c}/>` });
    }
    const swirlL = [262, 278, 294, 310, 326, 342];
    return html`
      <svg class="scene" viewBox="207 130 993 506" preserveAspectRatio="xMidYMid slice" role="img" aria-label="Ring seen from above on the construction grid">
        <defs>
          <linearGradient id="band" x1="0" y1="0" x2="0" y2="1"><stop offset="0" stop-color="#0a8a5e"/><stop offset=".2" stop-color="#047048"/><stop offset=".75" stop-color="#006842"/><stop offset="1" stop-color="#005a3b"/></linearGradient>
          <linearGradient id="shadeL"><stop offset="0" stop-color="#04583b"/><stop offset=".4" stop-color="#0a7a54"/><stop offset="1" stop-color="#07694a"/></linearGradient>
          <linearGradient id="shadeR"><stop offset="0" stop-color="#0a7a50"/><stop offset=".6" stop-color="#045a3c"/><stop offset="1" stop-color="#011c12"/></linearGradient>
          <linearGradient id="dark"><stop offset="0" stop-color="#000" stop-opacity="0"/><stop offset="1" stop-color="#000" stop-opacity=".6"/></linearGradient>
          <radialGradient id="glow"><stop offset="0" stop-color="#b4ffe0"/><stop offset=".4" stop-color="#3fc090" stop-opacity=".75"/><stop offset="1" stop-color="#0a8a5e" stop-opacity="0"/></radialGradient>
          <clipPath id="caps"><path d="M278 357q18-2 60 2v50q-40 4-60 1-27-5-27-26t27-27zM1038 359q40-4 58 0 25 5 25 25 0 22-25 26-30 4-58-1z"/></clipPath>
          <clipPath id="body"><path d="M332 358H1042V409H332z"/></clipPath>
        </defs>
        ${lines.filter((l) => !l.major).map((l) => l.s)}${lines.filter((l) => l.major).map((l) => l.s)}
        <path d="M686.500 137V384" stroke="#4fb4a4" stroke-width="1"/>
        <g clip-path="url(#caps)">
          <rect x="250" y="355" width="90" height="58" fill="url(#shadeL)"/>
          <rect x="1036" y="355" width="88" height="58" fill="url(#shadeR)"/>
          ${swirlL.map((x) => svg`<path d="M${x - 20} 411Q${x - 16} 388 ${x} 374T${x + 14} 355" fill="none" stroke="#03462f" stroke-width="2.200"/>
            <path d="M${x - 18} 411Q${x - 14} 388 ${x + 2} 374T${x + 16} 355" fill="none" stroke="#1f9a70" stroke-width=".8"/>`)}
          ${[1046, 1063, 1080, 1096, 1110].map((x) => svg`<path d="M${x - 20} 411C${x + 6} 400 ${x + 2} 378 ${x + 14} 356" fill="none" stroke="#01140d" stroke-width="4"/>
            <path d="M${x - 15} 411C${x + 10} 400 ${x + 6} 378 ${x + 18} 356" fill="none" stroke="#149064" stroke-width="1.400"/>`)}
        </g>
        <path d="M278 357q18-2 60 2M338 409q-40 4-60 1-27-5-27-26t27-27M1040 359q38-4 56 0 25 5 25 25 0 22-25 26-30 4-56-1" fill="none" stroke="#2f8a6c" stroke-width=".9"/>
        <rect x="333" y="358" width="707" height="51" fill="url(#band)"/>
        <g clip-path="url(#body)">
          <ellipse cx="503" cy="366" rx="56" ry="20" fill="url(#glow)"/>
          <ellipse cx="652" cy="366" rx="74" ry="17" fill="url(#glow)"/>
          <ellipse cx="837" cy="376" rx="24" ry="32" fill="url(#glow)"/>
          <rect x="780" y="358" width="43" height="51" fill="url(#dark)"/>
          <rect x="930" y="358" width="112" height="51" fill="url(#dark)"/>
          <path d="M334 359v50M549.500 359v50" stroke="#04563a"/><path d="M822 358q3 25 0 51" stroke="#012a1a" stroke-width="2" fill="none"/>
        </g>
        <path d="M333 358.500H1040M333 408.500H1040" stroke="#159068" stroke-width=".9"/>
        <path d="M337 371H526V392M338 397H460" fill="none" stroke="#12875f" stroke-width=".8"/>
        <path d="M450 371.500H526" stroke="#043f2a"/><rect x="338" y="375" width="188" height="18" fill="#04543a" opacity=".6"/>
        <path d="M700 371.500H808V397H700" fill="none" stroke="#1d9a6e" stroke-width=".8"/><path d="M600 371.500H690" stroke="#032f20"/>
        <rect x="567" y="375" width="238" height="18" fill="#034c34" opacity=".6"/><path d="M567.500 372v24" stroke="#022012" stroke-width="2"/>
        <rect x="846" y="373" width="190" height="21" fill="#02261a" opacity=".75"/><path d="M846 378v-7H1036M846 396.500H1036" fill="none" stroke="#17845e" stroke-width=".8"/>
        <path d="M1028 372l10-2v28l-10-2v-6h5v-12h-5z" fill="#2fa57c"/>
        <path d="M1039 360q4 24 0 48" stroke="#011" stroke-width="1.500" fill="none"/>
        ${this.stones([344, 351, 359, 367, 376, 387, 399, 411, 425, 438, 453, 468, 483, 499, 515], [12, 13, 14], (i) => Math.min(5.2, 2.8 + i * 0.26))}
        ${this.stones([577, 591, 606, 622, 637, 653, 670, 686, 702, 718, 734, 750, 766, 781, 796], [4, 5, 6], () => 5.2)}
        ${this.stones([856, 872, 888, 904, 919, 934, 948, 961, 974, 985, 997, 1007, 1016, 1024, 1031], [], (i) => Math.max(2.6, 5.4 - i * 0.2))}
        <path d="M231.500 592V611" stroke="#3f9ea4"/><path d="M231 610.500H252" stroke="#8c3038"/>
        <text class="ax" x="233" y="594" fill="#35a5a0">y</text><text class="ax" x="253" y="613" fill="#a03c4c">x</text>
      </svg>
      <button class="title"><span>Looking Down</span><svg viewBox="0 0 7 13"><path d="M1 5h5L3.500 9z" fill="#10301c"/></svg></button>`;
  }
}

@customElement("app-root")
class AppRoot extends LitElement {
  static styles = css`
    :host { display: flex; height: 100vh; overflow: hidden; background: #d9e3e2; font: 8px/10px "Liberation Sans", Arial, sans-serif; color: #15241b; }
    tool-panel { flex: 0 0 201px; overflow: hidden; }
    .split { flex: 0 0 6px; box-sizing: border-box; background: #aca8ac; border-left: 2px solid #e2e0e2; border-right: 1px solid #555; }
    main { flex: 1; min-width: 0; display: flex; flex-direction: column; }
    .log { height: 26px; display: flex; flex-direction: column; justify-content: flex-end; overflow: hidden; padding: 0 4px 1px; background: #80b28d; font-size: 9px; line-height: 11px; }
    .log p { margin: 0; white-space: nowrap; flex: none; }
    .cmd { display: flex; align-items: center; height: 12px; padding: 0 4px; border-top: 1px solid #42704f; background: #80b28a; font-size: 9px; font-weight: bold; }
    .cmd input { flex: 1; height: 11px; margin-left: 3px; padding: 0; border: 0; border-left: 1px solid #9cc4a4; background: none; font: inherit; outline: 0; }
    .tabs { display: flex; padding-left: 5px; align-items: flex-end; border-bottom: 1px solid #4c6055; }
    .tab { all: unset; position: relative; isolation: isolate; height: 10px; line-height: 10px; padding: 0 4px 0 5px; white-space: nowrap; cursor: pointer; }
    .tab::before, .tab::after { content: ""; position: absolute; z-index: -1; top: 0; bottom: 0; background: #d9e5e4; border-top: 1px solid #5a6e64; box-sizing: border-box; }
    .tab::before { left: 0; right: 50%; border-left: 1px solid #5a6e64; border-top-left-radius: 2px; transform: skewX(-24deg); }
    .tab::after { left: 30%; right: 0; border-right: 1px solid #5a6e64; border-top-right-radius: 3px; }
    .tab.on::before, .tab.on::after { background: #7fb08b; }
    .band1 { margin-top: 3px; padding-top: 1px; border-top: 1px solid #eef3f2; }
    .band2 { padding-top: 2px; border-top: 1px solid #bcc8c4; }
    .bar { display: flex; align-items: center; box-sizing: border-box; padding: 0 0 2px 5px; height: 23px; background: linear-gradient(#a9cab1, #d3e1da 75%, #d7e2e0); }
    .bar.b2 { height: 20px; background: linear-gradient(#a9cab1, #d6e3df 75%, #d9e4e4); }
    .bar tool-icon { flex: 0 0 19px; height: 18px; }
    .sep { width: 1px; height: 14px; margin: 0 2px 0 1px; background: #a0b0a8; }
    .views { display: flex; padding: 4px 0 0 1px; background: #dbe5e5; }
    .views .tab { height: 13px; line-height: 13px; padding: 0 5px 0 6px; }
    .views .plus { padding: 0 6px; }
  `;
  icons(s: string) {
    return s.split(" ").map((n) => (n === "|" ? html`<span class="sep"></span>` : html`<tool-icon name=${n}></tool-icon>`));
  }
  tabs(list: string[], on: string) {
    return list.map((t) => html`<button class=${classMap({ tab: true, on: t === on })} role="tab" aria-selected=${t === on}>${t}</button>`);
  }
  render() {
    return html`
      <tool-panel></tool-panel>
      <div class="split"></div>
      <main>
        <div class="log"><p>60 polysurfaces, 6 meshes, 22 block instances added to selection.</p><p>Command: _Delete</p><p>Showing 165 hidden objects.</p></div>
        <div class="cmd"><label for="cmd">Command:</label><input id="cmd" type="text" /></div>
        <div class="tabs band1" role="tablist">${this.tabs(["Standard", "CPlanes", "Set View", "Display", "Select", "Viewport Layout", "Visibility", "Transform", "Curve Tools", "Surface Tools", "Solid Tools", "Mesh Tools", "Render Tools", "Drafting", "New in V5"], "CPlanes")}</div>
        <div class="bar">${this.icons("p1 p2 p3 p4 p5 p6 p7 p8 p9 p10 | undo pick cgrid save folder q1 q2 a1 a2 a3 a4 a5 a6 | q3")}</div>
        <div class="tabs band2" role="tablist">${this.tabs(["SubD", "Emboss", "Sculpt"], "Sculpt")}</div>
        <div class="bar b2">${this.icons("r0 | r1 r2 r3 r4 r5 r6 r7 r8")}</div>
        <div class="views" role="tablist">${this.tabs(["Perspective", "Through Finger", "Side View", "Looking Down"], "Looking Down")}
          <button class="tab plus" aria-label="Add view">✢</button></div>
        <model-view></model-view>
      </main>`;
  }
}
